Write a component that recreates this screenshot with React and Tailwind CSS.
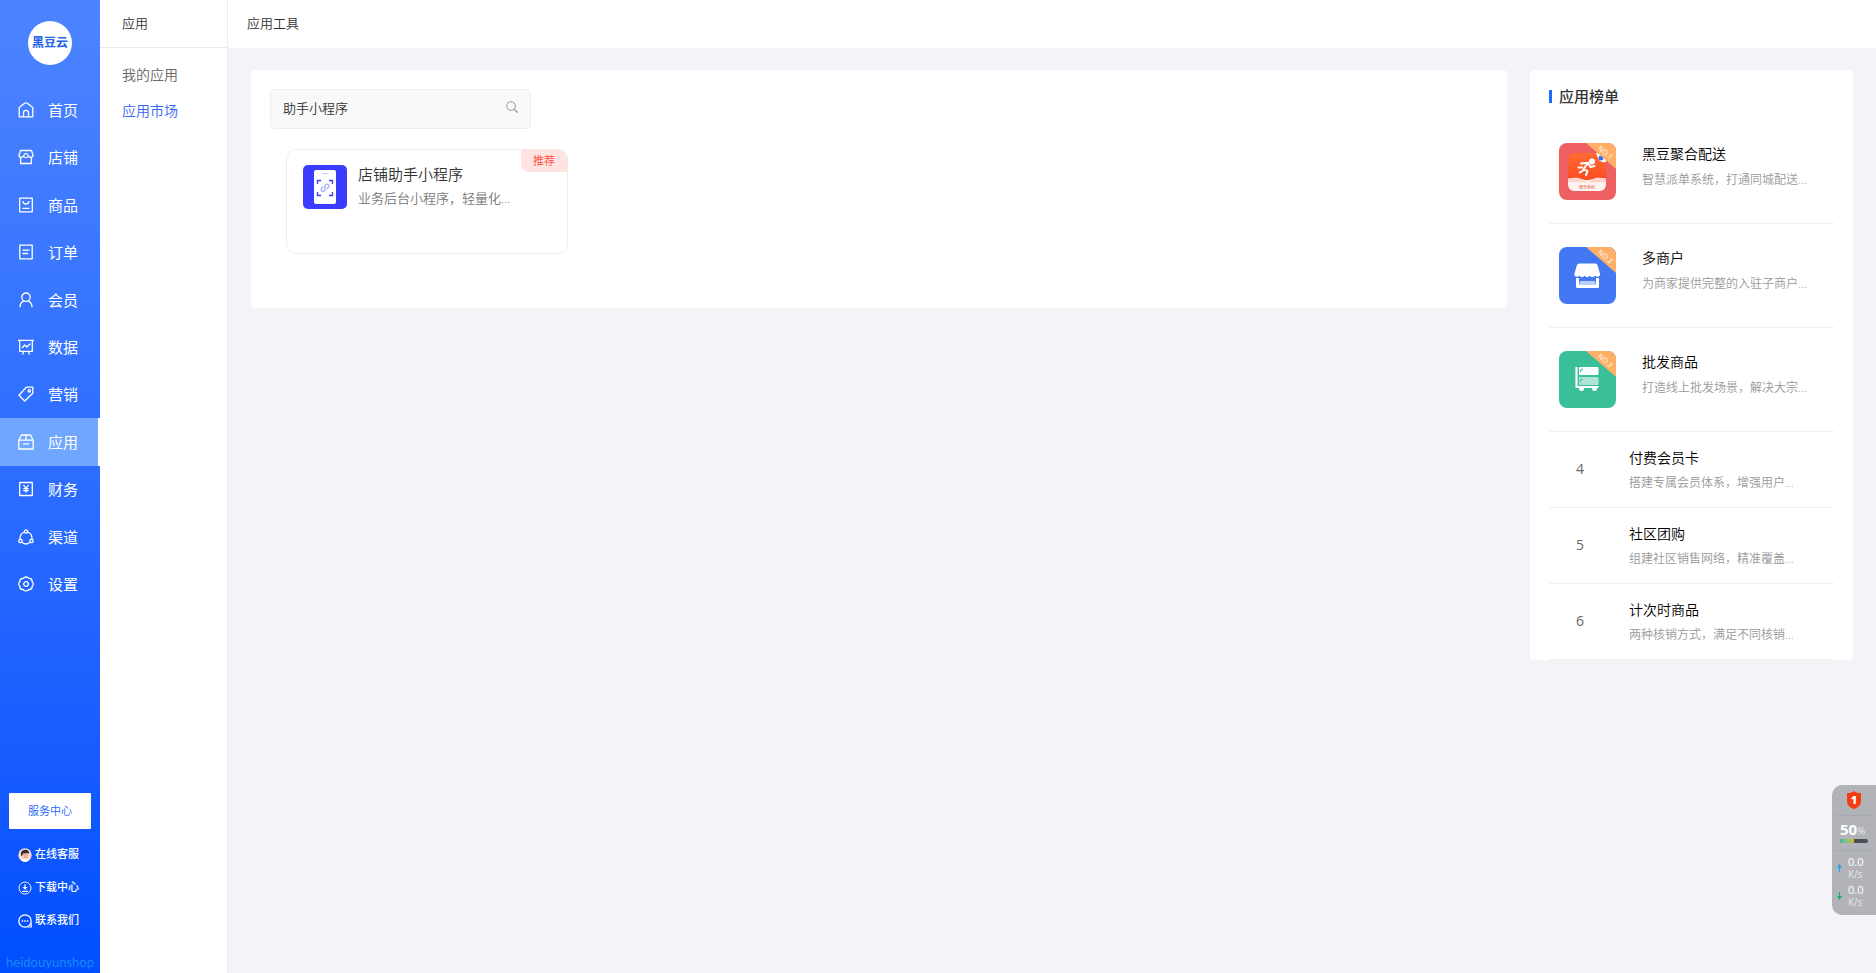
import { clsx } from "clsx";

const navItems = [
  { label: "首页", icon: HomeIcon },
  { label: "店铺", icon: ShopIcon },
  { label: "商品", icon: GoodsIcon },
  { label: "订单", icon: OrderIcon },
  { label: "会员", icon: MemberIcon },
  { label: "数据", icon: DataIcon },
  { label: "营销", icon: TagIcon },
  { label: "应用", icon: AppIcon, active: true },
  { label: "财务", icon: FinanceIcon },
  { label: "渠道", icon: ChannelIcon },
  { label: "设置", icon: SettingsIcon },
];

const subMenu = [
  { label: "我的应用" },
  { label: "应用市场", active: true },
];

const supportLinks = [
  { label: "在线客服", icon: AvatarIcon },
  { label: "下载中心", icon: DownloadIcon },
  { label: "联系我们", icon: ChatIcon },
];

const topApps = [
  { name: "黑豆聚合配送", desc: "智慧派单系统，打通同城配送...", color: "bg-[#ee5f61]", art: DeliveryArt },
  { name: "多商户", desc: "为商家提供完整的入驻子商户...", color: "bg-[#4378f4]", art: StoreArt },
  { name: "批发商品", desc: "打造线上批发场景，解决大宗...", color: "bg-[#3abf98]", art: WholesaleArt },
];

const otherApps = [
  { name: "付费会员卡", desc: "搭建专属会员体系，增强用户..." },
  { name: "社区团购", desc: "组建社区销售网络，精准覆盖..." },
  { name: "计次时商品", desc: "两种核销方式，满足不同核销..." },
];

function Icon({ children, className = "h-4 w-4" }) {
  return (
    <svg
      viewBox="0 0 16 16"
      className={clsx("shrink-0", className)}
      fill="none"
      stroke="currentColor"
      strokeWidth="1.3"
      strokeLinejoin="round"
      aria-hidden="true"
    >
      {children}
    </svg>
  );
}

function HomeIcon() {
  return (
    <Icon>
      <path d="M1.2 5.500 6.600 1.300q1.400-1 2.800 0L14.800 5.500V14.800H1.200Z" />
      <path d="M5.500 14.800v-4a2.500 2.500 0 0 1 5 0v4" />
    </Icon>
  );
}

function ShopIcon() {
  return (
    <Icon>
      <path d="M2.500 1.500h11l1.500 4.700c0 1.300-1 2.100-2.200 2.100S10.500 7.500 10.200 6.500C9.900 5.300 9 4.700 8 4.700s-1.900.6-2.200 1.800C5.500 7.500 4.400 8.300 3.200 8.300S1 7.500 1 6.200Z" />
      <path d="M2.600 8.300v6.200h10.800V8.300M5.500 7.600Q8 9.600 10.500 7.600" />
    </Icon>
  );
}

function GoodsIcon() {
  return (
    <Icon>
      <path d="M1.700 1.200h12.600v13.600H1.700Z" />
      <path d="M5 4c0 4 6 4 6 0M4.500 11.300h7" />
    </Icon>
  );
}

function OrderIcon() {
  return (
    <Icon>
      <path d="M1.800 1.200h12.400v13.600H1.800ZM4.500 6.200h7M4.500 9.500h5.500" />
    </Icon>
  );
}

function MemberIcon() {
  return (
    <Icon>
      <circle cx="8" cy="5.200" r="4.200" />
      <path d="M2 15.300c0-3.200 1.600-5.600 4.200-6.400M14 15.300c0-3.200-1.600-5.600-4.200-6.400" />
    </Icon>
  );
}

function DataIcon() {
  return (
    <Icon>
      <path d="M0 1.400h16M1.700 1.400v11h12.600v-11M5.700 12.400l-1.200 3M10.300 12.400l1.200 3M4 9l2.800-3 2 2 3.500-3.300" />
    </Icon>
  );
}

function TagIcon() {
  return (
    <Icon>
      <path d="M8.300 1.200h6.500v6L6.700 15 1 9.200Z" />
      <circle cx="11.300" cy="4.800" r="1.200" />
    </Icon>
  );
}

function AppIcon() {
  return (
    <Icon>
      <path d="M.8 6.200h14.400v8.800H.8ZM.8 6.200l2.700-5.200h9l2.700 5.200M8 1v5.200M5 9.800h6" />
    </Icon>
  );
}

function FinanceIcon() {
  return (
    <Icon>
      <path d="M1.700 1.500h12.600v13H1.700Z" />
      <path d="m5.500 4.200 2.500 3 2.500-3M8 7.200v4.600M5.300 7.600h5.400M5.300 9.700h5.400" />
    </Icon>
  );
}

function ChannelIcon() {
  return (
    <Icon>
      <circle cx="8" cy="2.500" r="1.600" />
      <circle cx="2.500" cy="12" r="1.700" />
      <circle cx="13.500" cy="12" r="1.700" />
      <path d="M6.300 3C3.500 4.100 1.800 7 2 10.300M9.700 3c2.800 1.100 4.500 4 4.300 7.300M4.200 13.500c2.200 1.700 5.400 1.700 7.600 0" />
    </Icon>
  );
}

function SettingsIcon() {
  return (
    <Icon>
      <path d="M6 1.700Q8 .3 10 1.700q.6.900 1.700.8 2.300.3 2.400 2.600 0 .9.700 1.500.8 1.400 0 2.800-.7.600-.7 1.500-.1 2.300-2.400 2.600-1.100-.1-1.700.8-2 1.400-4 0-.6-.9-1.700-.8-2.300-.3-2.400-2.600 0-.9-.7-1.500-.8-1.400 0-2.800.7-.6.700-1.500.1-2.300 2.400-2.600 1.100.1 1.700-.8Z" />
      <circle cx="8" cy="8" r="2.300" />
    </Icon>
  );
}

function AvatarIcon() {
  return (
    <svg viewBox="0 0 14 14" className="h-3.5 w-3.5 shrink-0" aria-hidden="true">
      <circle cx="7" cy="7" r="6.700" fill="#f6d9cf" />
      <path d="M3 7.500C2.300 4 4.300 2 7 1.800c3 0 4.600 1.700 4 3.900C9 4.500 7.500 5.700 5 5.600c-.4 2-.8 2.800-2 1.900Z" fill="#3a2a2e" />
      <path d="M4.800 6c2 .3 3.700-.8 5.300-.4.400 3-1 5-2.600 5-1.600 0-2.700-1.900-2.700-4.600Z" fill="#e9b49f" />
      <path d="M3 12.500c1.300-2 6.700-2 8 0a6.700 6.700 0 0 1-8 0Z" fill="#fff" />
    </svg>
  );
}

function DownloadIcon() {
  return (
    <svg viewBox="0 0 14 14" className="h-3.5 w-3.5 shrink-0" fill="none" stroke="currentColor" aria-hidden="true">
      <circle cx="7" cy="7" r="6" strokeWidth="0.9" />
      <path d="M7 3.300v4.500M4 10.300h6" strokeWidth="1.200" />
      <path d="M4.500 6h5L7 8.700Z" fill="currentColor" stroke="none" />
    </svg>
  );
}

function ChatIcon() {
  return (
    <svg viewBox="0 0 14 14" className="h-3.5 w-3.5 shrink-0" fill="none" stroke="currentColor" aria-hidden="true">
      <circle cx="7" cy="7" r="6.200" strokeWidth="1.300" />
      <path d="M9.500 13h3.700v-3.500" strokeWidth="1.200" />
      <path d="M3.700 7h1.500M6.250 7h1.500M8.800 7h1.500" strokeWidth="1.500" />
    </svg>
  );
}

function DeliveryArt() {
  return (
    <svg viewBox="0 0 57 57" className="h-full w-full" aria-hidden="true">
      <defs>
        <linearGradient id="delivery" x1="0" y1="0" x2="0" y2="1">
          <stop offset="0" stopColor="#ff6a34" />
          <stop offset="1" stopColor="#f83f18" />
        </linearGradient>
      </defs>
      <rect x="9" y="10" width="38" height="38" rx="6" fill="url(#delivery)" />
      <path d="M9 35.500c5-.5 9-1.500 13 .5 4 1.500 8 1.500 12 0 4-2 8-1 13-.5V42a6 6 0 0 1-6 6H15a6 6 0 0 1-6-6Z" fill="#fdf3f1" />
      <path d="M9 36c5-1 9-1.500 13 .5l6 3-19-.5ZM47 36c-5-1-9-1.500-13 .5l-6 3 19-.5Z" fill="#ffd3c8" />
      <circle cx="33" cy="18.500" r="3" fill="#fff" />
      <path
        d="M22 20.500l7-.8-4.500 6.500 4 2-1.500 4M24.800 27l-4 2.500M29 20l2.500 4 4-1M19.500 24.500h3.500"
        fill="none"
        stroke="#fff"
        strokeWidth="2"
        strokeLinecap="round"
        strokeLinejoin="round"
      />
      <path d="M37 10h4a6 6 0 0 1 6 6v3c-4 1-7-1-8-4Z" fill="#fff" />
      <circle cx="42" cy="15" r="2.500" fill="#3b6cf0" />
      <text x="28" y="46" textAnchor="middle" fontSize="4" fontWeight="400" fill="#ee6a52">
        聚合系统
      </text>
    </svg>
  );
}

function StoreArt() {
  return (
    <svg viewBox="0 0 57 57" className="h-full w-full" aria-hidden="true">
      <path d="M20.500 16.500h15.500c1.500 0 2.200.8 2.700 2L41 27c.5 2.500-3 4-4.800 1.500-1.500 2.200-4.200 2.200-5.400 0-1.200 2.200-4 2.200-5.200 0-1.300 2.200-4 2.200-5.200 0-1.600 2.500-5.600 1-5.100-1.500l2.500-8.500c.4-1.200 1.200-2 2.700-2Z" fill="#fff" />
      <path d="M18.500 31v8.500h20V31" fill="none" stroke="#fff" strokeWidth="3" strokeLinejoin="round" />
      <path d="M21 34h15l1 4H20Z" fill="#b9cdfb" />
    </svg>
  );
}

function WholesaleArt() {
  return (
    <svg viewBox="0 0 57 57" className="h-full w-full" aria-hidden="true">
      <path d="M17.500 16v20h22" fill="none" stroke="#fff" strokeWidth="2.200" strokeLinejoin="round" />
      <rect x="20" y="16" width="19.500" height="8" rx="1" fill="#fff" />
      <rect x="20" y="26" width="19.500" height="8" rx="1" fill="#b0e5d6" />
      <path d="M21.500 21c0-2 1-3 2.500-3M21.500 31c0-2 1-3 2.500-3" fill="none" stroke="#3abf98" strokeWidth="1.200" />
      <circle cx="22.500" cy="37.500" r="2.500" fill="#fff" />
      <circle cx="35.500" cy="37.500" r="2.500" fill="#fff" />
    </svg>
  );
}

function RankRibbon({ rank }) {
  return (
    <svg viewBox="0 0 30 26" className="absolute top-0 right-0 h-[26px] w-[30px]" aria-hidden="true">
      <path d="M0 0h30v26Z" fill="#ffb066" />
      <text x="19" y="12" textAnchor="middle" transform="rotate(41 19 10)" fontSize="7" fontWeight="500" fill="#fff">
        NO.{rank}
      </text>
    </svg>
  );
}

function Sidebar() {
  return (
    <aside className="flex w-[100px] shrink-0 flex-col bg-linear-to-b from-[#4c84ff] to-[#004eff] text-white">
      <div className="mx-auto mt-[21px] flex h-11 w-11 items-center justify-center rounded-full bg-white">
        <span className="text-[12px] leading-none font-bold whitespace-nowrap text-[#2263e6]">黑豆云</span>
      </div>
      <nav className="mt-[21px] flex h-[522px] flex-col">
        {navItems.map(({ label, icon: NavIcon, active }) => (
          <a
            key={label}
            href="#"
            className={clsx(
              "flex flex-1 items-center gap-[14px] border-r-2 pl-[18px] text-[15px] leading-5 font-normal",
              active ? "border-white bg-[#71a6ff]" : "border-transparent"
            )}
          >
            <NavIcon />
            {label}
          </a>
        ))}
      </nav>
      <button className="mx-[9px] mt-auto h-9 rounded-[1px] bg-white text-[11px] text-[#1a62ff]">服务中心</button>
      <div className="mt-[9px] flex flex-col">
        {supportLinks.map(({ label, icon: LinkIcon }) => (
          <a key={label} href="#" className="flex h-[33px] items-center gap-[3px] pl-[18px] text-[11px] font-medium">
            <LinkIcon />
            {label}
          </a>
        ))}
      </div>
      <p className="mt-[17px] pb-[3px] text-center font-['Lato'] text-[13px] leading-4 font-normal text-[#1689f5]">
        heidouyunshop
      </p>
    </aside>
  );
}

function SubSidebar() {
  return (
    <div className="w-32 shrink-0 border-r border-[#ebebf0] bg-white">
      <h2 className="flex h-12 items-center border-b border-[#ebebeb] pl-[22px] text-[13px] text-[#333]">应用</h2>
      <nav className="mt-2 flex flex-col">
        {subMenu.map((item) => (
          <a
            key={item.label}
            href="#"
            className={clsx(
              "flex h-9 items-center pl-[22px] text-[14px]",
              item.active ? "text-[#3465f7]" : "text-[#666]"
            )}
          >
            {item.label}
          </a>
        ))}
      </nav>
    </div>
  );
}

function AppCard() {
  return (
    <article className="relative mt-5 ml-4 flex h-[105px] w-[282px] gap-[11px] overflow-hidden rounded-[10px] border border-[#ededed] pt-[15px] pl-4">
      <svg viewBox="0 0 44 44" className="h-11 w-11 shrink-0" fill="none" aria-hidden="true">
        <rect width="44" height="44" rx="5" fill="#3a3dff" />
        <rect x="11" y="5" width="22" height="34" rx="2" fill="#fff" />
        <path d="M19 8.500h6" stroke="#c4c5ff" strokeWidth="1.200" />
        <path d="M14.500 19v-3.500H18M26 15.500h3.500V19M29.500 27v3.500H26M18 30.500h-3.500V27" stroke="#3a3dff" strokeWidth="1.300" />
        <path
          d="M20 22c-2.500.6-2.400 4.300 0 4.300 1.200 0 2-.8 2-2v-3c0-1.200.8-2 2-2 2.400 0 2.500 3.700 0 4.300"
          stroke="#b7b8ff"
          strokeWidth="1.600"
          strokeLinecap="round"
        />
      </svg>
      <div className="min-w-0">
        <h3 className="text-[15px] leading-[18px] text-[#333]">店铺助手小程序</h3>
        <p className="mt-[5px] text-[13px] leading-5 text-[#777]">业务后台小程序，轻量化...</p>
      </div>
      <span className="absolute top-0 right-0 flex h-[22px] w-[46px] items-center justify-center rounded-bl-[8px] bg-[#ffe3e1] text-[11px] text-[#ff4b3d]">
        推荐
      </span>
    </article>
  );
}

function RankPanel() {
  return (
    <section className="w-[323px] shrink-0 rounded-[4px] bg-white px-[19px] pt-[15px]">
      <h2 className="mb-[13px] flex h-[22px] items-center gap-[7px] text-[15px] font-medium text-[#333]">
        <span className="h-[13px] w-[3px] bg-[#1f6bff]" />
        应用榜单
      </h2>
      <ul>
        {topApps.map(({ name, desc, color, art: Art }, idx) => (
          <li key={name} className="flex h-[104px] gap-[26px] border-b border-[#f0f0f0] pt-[23px] pl-[10px]">
            <div className={clsx("relative h-[57px] w-[57px] shrink-0 overflow-hidden rounded-[8px]", color)}>
              <Art />
              <RankRibbon rank={idx + 1} />
            </div>
            <div className="pt-px whitespace-nowrap">
              <h3 className="text-[14px] leading-5 text-black">{name}</h3>
              <p className="mt-[6px] text-[12px] leading-5 text-[#999]">{desc}</p>
            </div>
          </li>
        ))}
        {otherApps.map((app, idx) => (
          <li key={app.name} className="flex h-[76px] border-b border-[#f0f0f0] pt-4">
            <span className="w-20 pt-[11px] pl-[27px] text-[14px] leading-5 font-normal text-[#666]">{idx + 4}</span>
            <div className="whitespace-nowrap">
              <h3 className="text-[14px] leading-5 text-black">{app.name}</h3>
              <p className="mt-[5px] text-[12px] leading-5 text-[#999]">{app.desc}</p>
            </div>
          </li>
        ))}
      </ul>
    </section>
  );
}

function SpeedRow({ color, down }) {
  return (
    <div className="flex h-7 items-center gap-[6px] pl-[5px]">
      <svg viewBox="0 0 5 8" className={clsx("h-2 w-[5px]", down && "rotate-180", color)} aria-hidden="true">
        <path d="M2.500 0 5 4H3v4H2V4H0Z" fill="currentColor" />
      </svg>
      <div className="text-[10px] leading-[13px] font-normal">
        <p className="text-[11px] font-medium">0.0</p>
        <p className="text-[#e6e7e9]">K/s</p>
      </div>
    </div>
  );
}

function MonitorWidget() {
  return (
    <div className="fixed right-0 bottom-[58px] h-[130px] w-11 rounded-l-[10px] bg-[#b1b3b8] text-white">
      <div className="mr-1 ml-[3px] flex h-[31px] items-center justify-center border-b border-[#a6abb0]">
        <svg viewBox="0 0 14 18" className="h-[18px] w-3.5" aria-hidden="true">
          <path d="M7 0c2 1.600 4.300 2.200 7 2.200V10c0 4-3 6.600-7 8-4-1.400-7-4-7-8V2.200C2.700 2.200 5 1.600 7 0Z" fill="#f53d12" />
          <text x="7" y="13" textAnchor="middle" fontSize="11" fontWeight="800" fill="#fff">
            1
          </text>
        </svg>
      </div>
      <div className="mr-[2px] ml-[3px] h-[35px] border-b border-[#a6abb0] pt-[5px] pl-[5px]">
        <p className="flex h-4 items-baseline text-[15px] leading-4 font-bold">
          50<span className="text-[10px] leading-none font-normal text-[#e6e7e9]">%</span>
        </p>
        <div className="mt-[2px] flex h-1 w-7 overflow-hidden rounded-[2px] bg-[#4b4f5a]">
          <div className="w-1/2 bg-linear-to-r from-[#35bfa5] to-[#c0c020]" />
        </div>
      </div>
      <div className="pt-[3px]">
        <SpeedRow color="text-[#1ea0f5]" />
        <SpeedRow color="text-[#12b35c]" down />
      </div>
    </div>
  );
}

export default function App() {
  return (
    <div className="flex min-h-screen bg-[#f3f3f8] font-['Open_Sans','Noto_Sans_CJK_SC',sans-serif] font-[350]">
      <Sidebar />
      <SubSidebar />
      <div className="min-w-0 flex-1">
        <header className="flex h-12 items-center bg-white pl-[19px]">
          <h1 className="text-[13px] text-[#333]">应用工具</h1>
        </header>
        <main className="flex items-start gap-[23px] px-[23px] pt-[22px]">
          <section className="min-w-0 flex-1 rounded-[4px] bg-white px-[19px] pt-[19px] pb-[54px]">
            <div className="flex h-10 w-[261px] items-center rounded-[5px] border border-[#ebedf2] bg-[#f9f9f9] pr-3 pl-3">
              <input
                type="text"
                aria-label="搜索应用"
                defaultValue="助手小程序"
                className="min-w-0 flex-1 bg-transparent text-[13px] text-[#333] outline-none"
              />
              <button aria-label="搜索" className="pb-1 text-[#999]">
                <svg viewBox="0 0 12 12" className="h-3 w-3" fill="none" stroke="currentColor" aria-hidden="true">
                  <circle cx="5" cy="5" r="4.300" />
                  <path d="m8.200 8.200 3.400 3.400" strokeWidth="1.300" />
                </svg>
              </button>
            </div>
            <AppCard />
          </section>
          <RankPanel />
        </main>
      </div>
      <MonitorWidget />
    </div>
  );
}
